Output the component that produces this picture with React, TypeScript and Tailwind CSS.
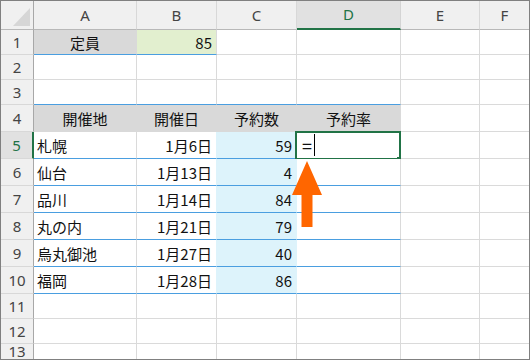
import React from 'react';

type Align = 'left' | 'right' | 'center';

interface Cell {
  text?: string;
  align?: Align;
  cls: string;
}

const alignCls: Record<Align, string> = {
  left: 'justify-start pl-[3px]',
  right: 'justify-end pr-[4px]',
  center: 'justify-center',
};

// cell fills and border colours
const PLAIN = 'bg-white border-r-[#dadada] border-b-[#dadada]';
const BLUE_UNDER = 'bg-white border-r-[#dadada] border-b-[#4a9ee0]';
const HEAD = 'bg-[#d9d9d9] border-r-[#d9d9d9] border-b-[#d9d9d9]';
const HEAD_LAST = 'bg-[#d9d9d9] border-r-[#dadada] border-b-[#d9d9d9]';
const ROW_A = 'bg-white border-r-[#dadada] border-b-[#4a9ee0]';
const ROW_B = 'bg-white border-r-[#ddf3fb] border-b-[#4a9ee0]';
const ROW_C = 'bg-[#ddf3fb] border-r-[#ddf3fb] border-b-[#4a9ee0]';
const ROW_D = 'bg-white border-r-[#dadada] border-b-[#4a9ee0]';

const blank = (n: number): Cell[] => Array.from({ length: n }, () => ({ cls: PLAIN }));

const bookings = [
  { place: '札幌', date: '1月6日', count: '59' },
  { place: '仙台', date: '1月13日', count: '4' },
  { place: '品川', date: '1月14日', count: '84' },
  { place: '丸の内', date: '1月21日', count: '79' },
  { place: '烏丸御池', date: '1月27日', count: '40' },
  { place: '福岡', date: '1月28日', count: '86' },
];

const rows: Cell[][] = [
  [
    { text: '定員', align: 'center', cls: 'bg-[#d9d9d9] border-r-[#d9d9d9] border-b-[#4a9ee0]' },
    { text: '85', align: 'right', cls: 'bg-[#e2efcf] border-r-[#dadada] border-b-[#4a9ee0]' },
    ...blank(4),
  ],
  blank(6),
  [{ cls: BLUE_UNDER }, { cls: BLUE_UNDER }, { cls: BLUE_UNDER }, { cls: BLUE_UNDER }, ...blank(2)],
  [
    { text: '開催地', align: 'center', cls: HEAD },
    { text: '開催日', align: 'center', cls: HEAD },
    { text: '予約数', align: 'center', cls: HEAD },
    { text: '予約率', align: 'center', cls: HEAD_LAST },
    ...blank(2),
  ],
  ...bookings.map((b) => [
    { text: b.place, align: 'left' as Align, cls: ROW_A },
    { text: b.date, align: 'right' as Align, cls: ROW_B },
    { text: b.count, align: 'right' as Align, cls: ROW_C },
    { cls: ROW_D },
    ...blank(2),
  ]),
  blank(6),
  blank(6),
  blank(6),
];

const columns = ['A', 'B', 'C', 'D', 'E', 'F'];

export default function App() {
  return (
    <div className="relative w-[530px] h-[360px] overflow-hidden border border-[#808080] bg-white">
      <div className="grid grid-cols-[33px_103px_80px_80px_104px_79px_50px] grid-rows-[29px_25px_25px_25px_27px_27px_27px_27px_27px_27px_27px_25px_25px_16px]">
        {/* select-all corner */}
        <div className="flex items-end justify-end pr-[3px] pb-[3px] bg-[#f0f0f0] border-r border-b border-r-[#a8a8a8] border-b-[#b8b8b8]">
          <svg width="17" height="18" viewBox="0 0 17 18">
            <polygon points="17,0 17,18 0,18" fill="#d6d6d6" />
          </svg>
        </div>

        {columns.map((c) =>
          c === 'D' ? (
            <div
              key={c}
              className="flex items-center justify-center bg-[#e1e1e1] border-r border-b-2 border-r-[#d4d4d4] border-b-[#217346] font-['Noto_Sans',sans-serif] text-[15px] text-[#217346]"
            >
              {c}
            </div>
          ) : (
            <div
              key={c}
              className="flex items-center justify-center bg-[#f0f0f0] border-r border-b border-r-[#d8d8d8] border-b-[#b8b8b8] font-['Noto_Sans',sans-serif] text-[15px] text-[#444]"
            >
              {c}
            </div>
          )
        )}

        {rows.map((cells, r) => (
          <React.Fragment key={r}>
            {r === 4 ? (
              <div className="flex items-center justify-center bg-[#e1e1e1] border-r-2 border-b border-r-[#217346] border-b-[#d8d8d8] font-['Noto_Sans',sans-serif] text-[15px] text-[#217346]">
                {r + 1}
              </div>
            ) : (
              <div className="flex items-center justify-center bg-[#f0f0f0] border-r border-b border-r-[#a8a8a8] border-b-[#d8d8d8] font-['Noto_Sans',sans-serif] text-[15px] text-[#444]">
                {r + 1}
              </div>
            )}
            {cells.map((cell, i) => (
              <div
                key={i}
                className={`relative flex items-center border-r border-b whitespace-nowrap font-['Noto_Sans_CJK_JP',sans-serif] text-[15px] leading-none text-[#111] ${cell.cls} ${alignCls[cell.align ?? 'left']}`}
              >
                {cell.text}
                {r === 4 && i === 3 && (
                  <>
                    <span className="ml-[2px] text-[18px]">=</span>
                    <span className="ml-[2px] w-[1px] h-[22px] bg-black" />
                    <div className="absolute -left-[2px] -top-[1px] w-[106px] h-[29px] border-2 border-[#217346]" />
                    <div className="absolute left-[100px] top-[25px] w-[5px] h-[5px] bg-[#217346]" />
                  </>
                )}
              </div>
            ))}
          </React.Fragment>
        ))}
      </div>

      {/* pointer arrow */}
      <svg className="absolute left-[291px] top-[160px]" width="31" height="66" viewBox="0 0 31 66">
        <polygon points="15,0 30,34 20.5,34 20.5,66 9.5,66 9.5,34 0,34" fill="#ff6600" />
      </svg>
    </div>
  );
}
